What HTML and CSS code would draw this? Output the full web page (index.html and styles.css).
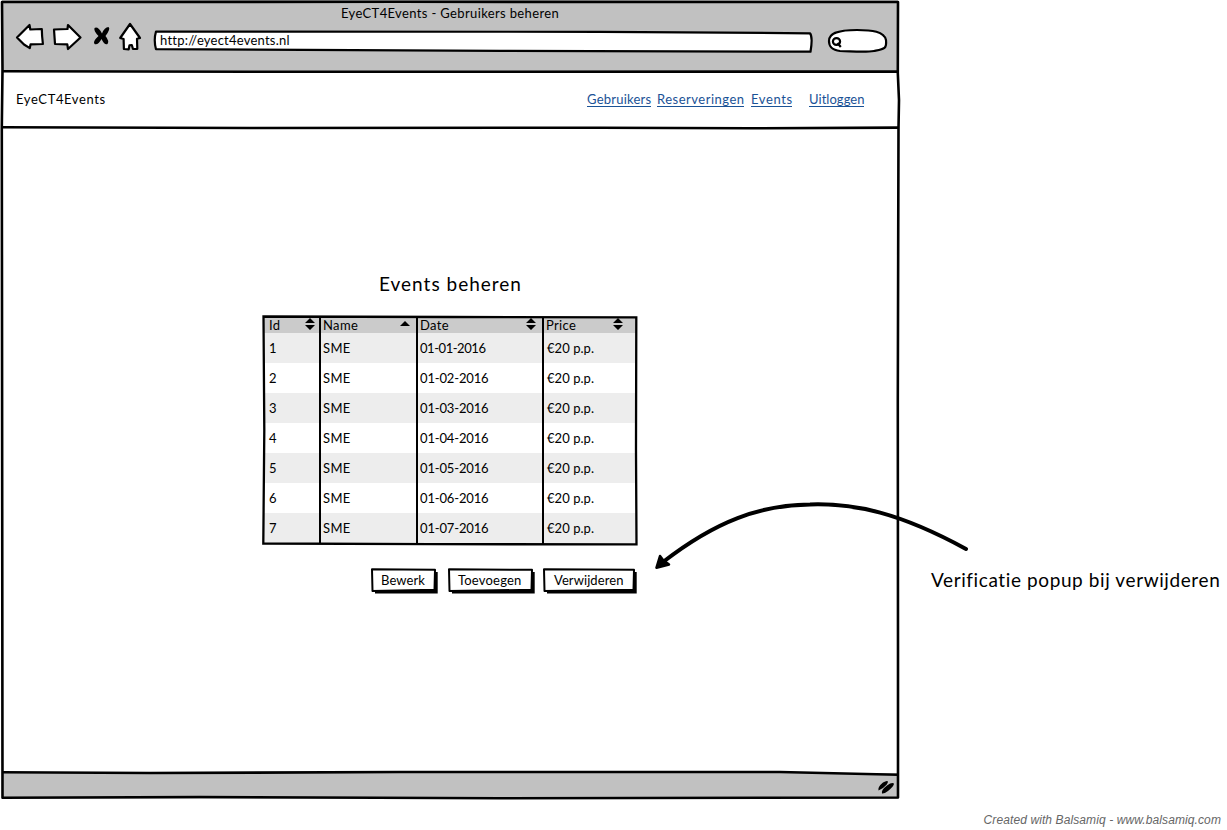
FILE: index.html
```html
<!DOCTYPE html>
<html lang="nl">
<head>
<meta charset="utf-8">
<title>EyeCT4Events - Gebruikers beheren</title>
<link rel="stylesheet" href="styles.css">
</head>
<body>
<div class="board">
  <div class="browser">
    <header class="chrome">
      <div class="title">EyeCT4Events - Gebruikers beheren</div>
      <div class="toolbar">
        <svg class="nav-icons" width="130" height="32" viewBox="14 21 130 32">
          <g fill="#fff" stroke="#000" stroke-width="2.200" stroke-linejoin="round">
            <path d="M17 37.500 29.500 25l.8 4.500 11.500-.5.300 7 .8 8-12.300.3-.8 3.800L24 44.500Z"/>
            <path d="M54 29.500 67.500 29 68 25l12.500 12.500L68 49l-.7-4.700L55 44Z"/>
            <path d="M130 24l10 14-3 .8.3 10-4.300.2-1.200-4-2.300.3-.8 4-4.800-.3-.3-10-3.400-1Z"/>
          </g>
          <path d="M94.500 28Q98 26 102 33.500Q104.500 27 108.500 27Q111 28.500 105.500 36Q109.500 41 107.500 44Q104.500 45.500 101.500 39Q98 45.500 94.500 44Q92.500 41.500 98.500 36Q93.500 31 94.500 28Z"/>
        </svg>
        <div class="address">
          <svg class="sketch" width="662" height="24" viewBox="152 29 662 24"><path d="M156 31.500 600 31.800 810 33.300Q813 37 810.500 51.700L500 50.900 156 49.200Q153.500 40 156 31.500Z" fill="#fff" stroke="#000" stroke-width="2.200" stroke-linejoin="round"/></svg>
          <span class="url">http://eyect4events.nl</span>
        </div>
        <svg class="search" width="62" height="28" viewBox="826 27 62 28">
          <path d="M829 41C829 34 836 30 857 30C872 30 884 31.500 886 40C887 49 884 49 874 51C866 52.500 857 51.600 840 51C832 50 829 47 829 41Z" fill="#fff" stroke="#000" stroke-width="2.200"/>
          <ellipse cx="836.500" cy="41.500" rx="3.600" ry="3.300" fill="none" stroke="#000" stroke-width="2.200"/>
          <path d="M837.500 43l3.300 4" fill="none" stroke="#000" stroke-width="2.200"/>
        </svg>
      </div>
    </header>
    <nav class="site-nav">
      <span class="brand">EyeCT4Events</span>
      <a class="link l-users">Gebruikers</a>
      <a class="link l-res">Reserveringen</a>
      <a class="link l-events">Events</a>
      <a class="link l-out">Uitloggen</a>
    </nav>
    <main class="content">
      <h1 class="heading">Events beheren</h1>
      <div class="grid">
        <div class="row head">
          <div class="cell">Id<svg class="sort" width="10" height="12"><path d="M0 5 5 0l5 5ZM0 7h10L5 12Z"/></svg></div>
          <div class="cell">Name<svg class="sort up" width="10" height="12"><path d="M0 8 5 3l5 5Z"/></svg></div>
          <div class="cell">Date<svg class="sort date-sort" width="10" height="12"><path d="M0 5 5 0l5 5ZM0 7h10L5 12Z"/></svg></div>
          <div class="cell">Price<svg class="sort last" width="10" height="12"><path d="M0 5 5 0l5 5ZM0 7h10L5 12Z"/></svg></div>
        </div>
        <div class="row"><div class="cell">1</div><div class="cell">SME</div><div class="cell date narrow">01-01-2016</div><div class="cell price">€20 p.p.</div></div>
        <div class="row"><div class="cell">2</div><div class="cell">SME</div><div class="cell date">01-02-2016</div><div class="cell price">€20 p.p.</div></div>
        <div class="row"><div class="cell">3</div><div class="cell">SME</div><div class="cell date">01-03-2016</div><div class="cell price">€20 p.p.</div></div>
        <div class="row"><div class="cell">4</div><div class="cell">SME</div><div class="cell date">01-04-2016</div><div class="cell price">€20 p.p.</div></div>
        <div class="row"><div class="cell">5</div><div class="cell">SME</div><div class="cell date">01-05-2016</div><div class="cell price">€20 p.p.</div></div>
        <div class="row"><div class="cell">6</div><div class="cell">SME</div><div class="cell date">01-06-2016</div><div class="cell price">€20 p.p.</div></div>
        <div class="row"><div class="cell">7</div><div class="cell">SME</div><div class="cell date">01-07-2016</div><div class="cell price">€20 p.p.</div></div>
        <svg class="grid-lines" width="378" height="232" viewBox="261 315 378 232" fill="none" stroke="#000">
          <path d="M263.500 316.500 450 317 636.300 317.300 636 450 636.500 544.300 430 544.200 263.300 543.500 264.300 430Z" stroke-width="2.300"/>
          <path d="M320 317V544M417 317V543.500M543 317V544" stroke-width="2"/>
        </svg>
      </div>
      <div class="actions">
        <div class="btn edit"><svg class="sketch" width="68" height="26" viewBox="0 0 68 26"><path d="M4 4h62.700v21.500H4Z"/><path class="face" d="M1 1.300 64 1.800 63.500 21.800 1.500 23Z"/></svg><span>Bewerk</span></div>
        <div class="btn add"><svg class="sketch" width="88" height="26" viewBox="0 0 88 26"><path d="M4 4h82.700v21.500H4Z"/><path class="face" d="M1 1.300 84 1.800 83.500 21.800 1.500 23Z"/></svg><span>Toevoegen</span></div>
        <div class="btn remove"><svg class="sketch" width="94" height="26" viewBox="0 0 94 26"><path d="M4 4h89.700v21.500H4Z"/><path class="face" d="M1 1.300 91 1.800 90.500 21.800 1.500 23Z"/></svg><span>Verwijderen</span></div>
      </div>
    </main>
    <footer class="status">
      <svg class="grip" width="18" height="16" viewBox="877 779 18 16"><path d="M878.500 790.500Q877.500 787 883 782.500Q887 780 888 781.500Q888 784 883 788ZM882 793.500Q881 790 887 785.500Q892 782 894 783.500Q894 786 888 791Q884 794 882 793.500Z"/></svg>
    </footer>
    <svg class="frame" width="902" height="802" viewBox="0 0 902 802" fill="none" stroke="#000" stroke-width="2.600" stroke-linejoin="round">
      <path d="M2 2 400 1.800 898 2 897.800 73 899 100 898.500 128 897.800 400 898 650 898 797.500 500 798.300 200 797 2.500 797.700 2 300 1.800 128 2.500 70Z"/>
      <path d="M2 71.300 250 71.800 898 71.600M2 127.300 250 128 600 127.700 750 128.300 899 127.600M2 772.300 150 773 400 772 780 772 898 774.800"/>
    </svg>
  </div>
  <aside class="note">Verificatie popup bij verwijderen</aside>
  <svg class="arrow" width="330" height="80" viewBox="645 495 330 80">
    <path d="M966 549C900 513 855 503 810 504.500C760 505 716 521 663 562" fill="none" stroke="#000" stroke-width="4" stroke-linecap="round"/>
    <path d="M660 556 663 560 669 564.500 656.500 567.700Z" stroke="#000" stroke-width="2.500" stroke-linejoin="round"/>
  </svg>
</div>
<div class="credit">Created with Balsamiq - www.balsamiq.com</div>
</body>
</html>
```

FILE: styles.css
```css
* { box-sizing: border-box; }
body { margin: 0; width: 1227px; height: 830px; overflow: hidden; background: #fff; color: #000; font: 13px/16px Lato, "Open Sans", sans-serif; letter-spacing: .6px; }
.board { position: relative; display: flex; height: 802px; }
.browser { position: relative; display: flex; flex-direction: column; width: 900px; height: 799px; }
.chrome { height: 72px; margin: 0 2px; background: #c1c1c1; padding-top: 5px; }
.title { text-align: center; letter-spacing: .36px; }
.toolbar { display: flex; align-items: flex-start; padding-left: 12px; }
.nav-icons { flex: none; }
.address { position: relative; width: 662px; height: 24px; margin: 8px 12px 0 8px; padding: 3px 8px; }
.url { position: relative; display: block; letter-spacing: .23px; }
.sketch { position: absolute; left: 0; top: 0; }
.search { margin-top: 6px; flex: none; }
.site-nav { display: flex; height: 56px; padding: 19px 16px 0; align-items: flex-start; }
.brand { width: 571px; }
.link { color: #1a5296; height: 16px; border-bottom: 1px solid #1a5296; white-space: nowrap; }
.l-users { width: 64px; margin-right: 6px; letter-spacing: .22px; }
.l-res { width: 87px; margin-right: 7px; letter-spacing: .5px; }
.l-events { width: 41px; margin-right: 17px; }
.l-out { width: 55px; letter-spacing: .05px; }
.content { flex: 1; padding: 143px 0 0 263px; }
.heading { margin: 0 0 21px; width: 375px; text-align: center; font-size: 19px; font-weight: 400; line-height: 25px; letter-spacing: 1px; }
.grid { position: relative; width: 374px; }
.row { display: grid; grid-template-columns: 57px 97px 126px 94px; height: 30px; padding-top: 7px; letter-spacing: .35px; }
.row:nth-child(even) { background: #ededed; }
.row.head { height: 16px; padding-top: 0; background: #cbcbcb; }
.cell { padding-left: 3px; display: flex; justify-content: space-between; }
.cell:first-child { padding-left: 6px; }
.date { letter-spacing: -.15px; }
.date.narrow { letter-spacing: -.45px; }
.price { letter-spacing: .05px; padding-left: 4px; }
.sort { margin: 1px 5px 0 0; }
.sort.up { margin-right: 7px; }
.sort.date-sort { margin-right: 7px; }
.sort.last { margin-right: 14px; }
.grid-lines { position: absolute; left: -2px; top: -2px; }
.actions { display: flex; margin: 25px 0 0 108px; }
.btn { position: relative; height: 26px; padding-top: 4px; }
.btn span { position: relative; display: block; }
.face { fill: #fff; stroke: #000; stroke-width: 2; stroke-linejoin: round; }
.edit { width: 68px; margin-right: 9px; padding-left: 10px; letter-spacing: .1px; }
.add { width: 88px; margin-right: 7px; padding-left: 10px; letter-spacing: .2px; }
.remove { width: 94px; padding-left: 11px; letter-spacing: .08px; }
.status { display: flex; justify-content: flex-end; height: 26px; margin: 0 2px; padding: 6px 3px; background: #c1c1c1; }
.frame { position: absolute; left: 0; top: 0; }
.note { margin: 568px 0 0 31px; font-size: 19px; line-height: 24px; letter-spacing: .6px; white-space: nowrap; }
.arrow { position: absolute; left: 645px; top: 495px; }
.credit { margin: 10px 6px 0; text-align: right; font: italic 12px/16px "Liberation Sans", Arial, sans-serif; letter-spacing: .1px; color: #666; }
```
